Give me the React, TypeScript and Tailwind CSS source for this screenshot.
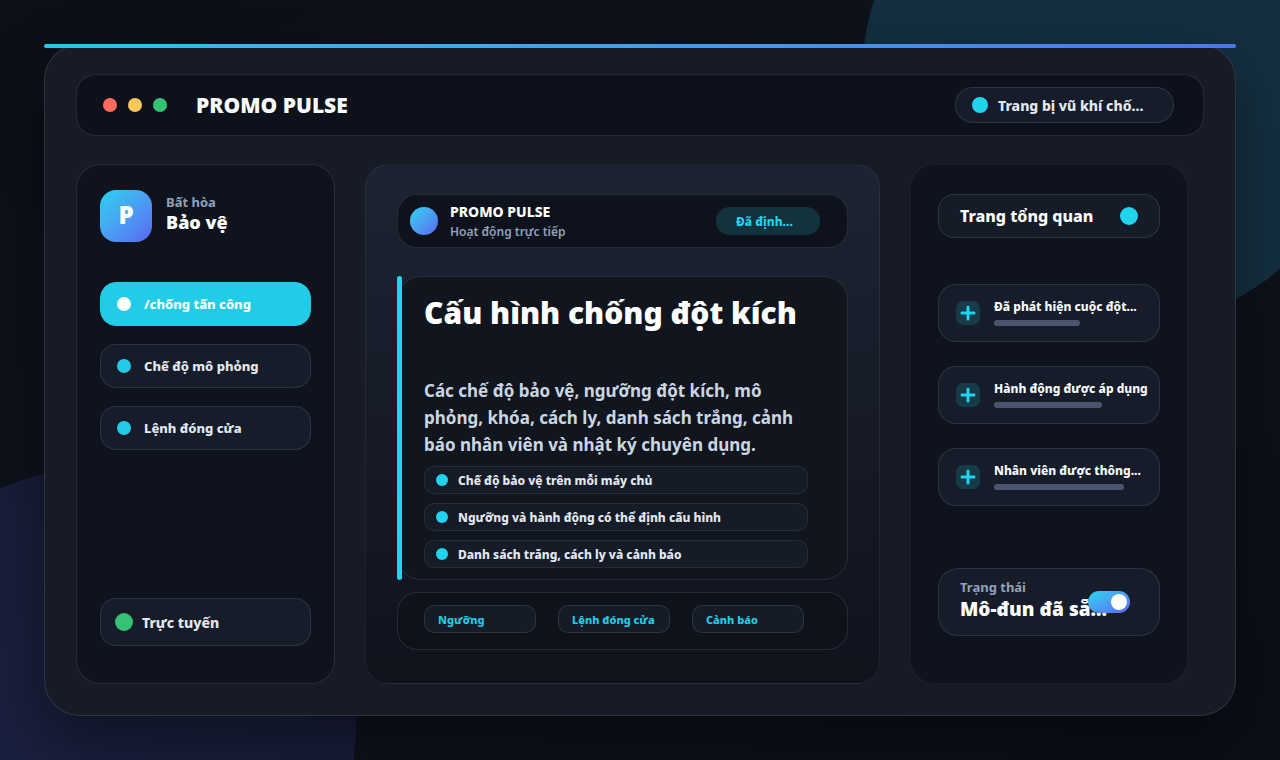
import { useState } from "react";
import clsx from "clsx";

const navItems = ["/chống tấn công", "Chế độ mô phỏng", "Lệnh đóng cửa"];

const features = [
  "Chế độ bảo vệ trên mỗi máy chủ",
  "Ngưỡng và hành động có thể định cấu hình",
  "Danh sách trắng, cách ly và cảnh báo",
];

const chips = ["Ngưỡng", "Lệnh đóng cửa", "Cảnh báo"];

const events = [
  { label: "Đã phát hiện cuộc đột...", progress: 86 },
  { label: "Hành động được áp dụng", progress: 108 },
  { label: "Nhân viên được thông...", progress: 130 },
];

export default function App() {
  return (
    <div className="relative isolate flex min-h-screen flex-col overflow-hidden bg-linear-to-br from-[#0b0f17] via-[#0f131c] to-[#0b0e16] p-11 font-['Noto_Sans',sans-serif] text-white">
      <div className="absolute -top-44 -right-[88px] -z-10 size-[506px] rounded-full bg-[#142f3f]" />
      <div className="absolute -bottom-[220px] -left-[156px] -z-10 size-[512px] rounded-full bg-linear-to-tr from-[#1b2345] to-[#171a33]" />

      <main className="relative flex flex-1 flex-col gap-7 rounded-[36px] border border-slate-400/20 bg-[#171b25] px-[31px] pt-[29px] pb-[31px] shadow-[0_24px_60px_rgba(0,0,0,0.4)]">
        <div className="absolute -inset-x-px -top-px h-1 rounded-full bg-linear-to-r from-[#2fc3ec] to-[#4a76f0]" />
        <Header />
        <div className="grid flex-1 grid-cols-[259px_minmax(0,1fr)_278px] gap-[30px] pr-4">
          <Sidebar />
          <Center />
          <Overview />
        </div>
      </main>
    </div>
  );
}

function Header() {
  return (
    <header className="flex h-[62px] items-center rounded-[20px] border border-white/10 bg-[#0d111b] pr-[29px] pl-[26px]">
      <div className="flex gap-[11px]">
        <span className="size-3.5 rounded-full bg-[#ff6b5f]" />
        <span className="size-3.5 rounded-full bg-[#f9c75c]" />
        <span className="size-3.5 rounded-full bg-[#35c275]" />
      </div>
      <h1 className="ml-[29px] text-[21px] leading-6 font-black text-slate-50">PROMO PULSE</h1>
      <div className="ml-auto flex h-9 w-[219px] items-center gap-2.5 rounded-full border border-white/10 bg-[#161c29] px-4">
        <span className="size-4 rounded-full bg-[#22d3ee]" />
        <span className="pt-0.5 text-sm font-extrabold text-slate-200">Trang bị vũ khí chố...</span>
      </div>
    </header>
  );
}

function Sidebar() {
  const [active, setActive] = useState(0);

  return (
    <aside className="flex flex-col rounded-3xl border border-white/10 bg-[#0f131d] px-[23px] pt-[25px] pb-[37px]">
      <div className="flex items-center gap-3.5">
        <div className="flex size-[52px] items-center justify-center rounded-2xl bg-linear-to-br from-[#22d3ee] to-[#5865f2] pb-0.5 text-2xl font-black">
          P
        </div>
        <div className="pb-2">
          <p className="text-[13px] leading-5 font-bold text-slate-400">Bất hòa</p>
          <p className="text-lg leading-5 font-black">Bảo vệ</p>
        </div>
      </div>

      <nav className="mt-10 flex flex-col gap-[18px]">
        {navItems.map((item, i) => (
          <button
            key={item}
            type="button"
            onClick={() => setActive(i)}
            className={clsx(
              "flex h-11 items-center gap-[13px] rounded-2xl border px-4 text-[13px] font-extrabold",
              i === active ? "border-[#22cce6] bg-[#22cce6] text-white" : "border-white/10 bg-[#161c29] text-slate-200",
            )}
          >
            <span className={clsx("size-3.5 rounded-full", i === active ? "bg-white" : "bg-[#22cce6]")} />
            <span className="pt-0.5">{item}</span>
          </button>
        ))}
      </nav>

      <div className="mt-auto flex h-12 items-center gap-[9px] rounded-2xl border border-white/10 bg-[#161c29] px-3.5">
        <span className="size-[18px] rounded-full bg-[#35c275]" />
        <span className="pt-0.5 text-sm font-extrabold text-slate-200">Trực tuyến</span>
      </div>
    </aside>
  );
}

function Center() {
  return (
    <section className="flex flex-col rounded-3xl border border-white/6 bg-linear-to-b from-[#1e2333] to-[#0f131c] px-[31px] pt-[29px] pb-[33px]">
      <div className="flex h-[54px] items-center rounded-[20px] border border-white/10 bg-[#0e121c] pr-[27px] pl-3">
        <span className="size-7 rounded-full bg-linear-to-br from-[#22d3ee] to-[#5865f2]" />
        <div className="ml-3 pt-0.5">
          <p className="text-sm leading-5 font-extrabold">PROMO PULSE</p>
          <p className="text-xs leading-5 font-semibold text-slate-400">Hoạt động trực tiếp</p>
        </div>
        <span className="ml-auto flex h-7 w-[104px] items-center rounded-full bg-[#14323d] px-5 pt-0.5 text-xs font-extrabold text-[#22d3ee]">
          Đã định...
        </span>
      </div>

      <article className="relative mt-7 rounded-3xl border border-white/10 bg-[#10151e] pt-4 pr-[39px] pb-[11px] pl-[26px]">
        <div className="absolute -inset-y-px -left-px w-[5px] rounded-full bg-[#22d3ee]" />
        <h2 className="text-3xl leading-10 font-black whitespace-nowrap">Cấu hình chống đột kích</h2>
        <p className="mt-11 text-[17px] leading-[27px] font-bold text-slate-300">
          Các chế độ bảo vệ, ngưỡng đột kích, mô phỏng, khóa, cách ly, danh sách trắng, cảnh báo nhân viên và nhật ký
          chuyên dụng.
        </p>
        <ul className="mt-2 flex flex-col gap-[9px]">
          {features.map((feature) => (
            <li
              key={feature}
              className="flex h-7 items-center gap-2.5 rounded-[10px] border border-white/8 bg-[#161b28] px-[11px] text-xs font-extrabold text-slate-200"
            >
              <span className="size-3 rounded-full bg-[#22d3ee]" />
              <span className="pt-0.5">{feature}</span>
            </li>
          ))}
        </ul>
      </article>

      <div className="mt-auto flex h-[58px] gap-[22px] rounded-[20px] border border-white/10 bg-[#0e121b] px-[26px] pt-3">
        {chips.map((chip) => (
          <button
            key={chip}
            type="button"
            className="h-7 w-28 rounded-[10px] border border-white/10 bg-[#161b28] px-[13px] pt-0.5 text-left text-[11px] font-extrabold whitespace-nowrap text-[#22cce6]"
          >
            {chip}
          </button>
        ))}
      </div>
    </section>
  );
}

function Overview() {
  return (
    <aside className="flex flex-col rounded-3xl border border-white/5 bg-[#0f131d] px-[27px] pt-[29px] pb-[47px]">
      <div className="flex h-11 items-center justify-between rounded-2xl border border-white/10 bg-[#161b28] px-[21px]">
        <h2 className="text-base font-extrabold">Trang tổng quan</h2>
        <span className="size-[18px] rounded-full bg-[#22d3ee]" />
      </div>

      <ul className="mt-[46px] flex flex-col gap-6">
        {events.map((event) => (
          <li
            key={event.label}
            className="flex h-[58px] items-center gap-3.5 rounded-[18px] border border-white/10 bg-[#161c29] px-[17px]"
          >
            <PlusIcon />
            <div className="pb-[3px] whitespace-nowrap">
              <p className="mb-[3px] text-xs leading-5 font-extrabold text-slate-50">{event.label}</p>
              <div className="h-1.5 rounded-full bg-[#4c556f]" style={{ width: event.progress }} />
            </div>
          </li>
        ))}
      </ul>

      <StatusToggle />
    </aside>
  );
}

function PlusIcon() {
  return (
    <svg className="size-6 shrink-0" viewBox="0 0 24 24" fill="none" aria-hidden>
      <rect width="24" height="24" rx="7" fill="#163a47" />
      <path d="M12 6v12M6 12h12" stroke="#22d3ee" strokeWidth="3" strokeLinecap="round" />
    </svg>
  );
}

function StatusToggle() {
  const [enabled, setEnabled] = useState(true);

  return (
    <label className="relative mt-auto flex h-[68px] flex-col rounded-[20px] border border-white/10 bg-[#161c29] px-[21px] pt-2">
      <span className="text-[13px] leading-5 font-bold text-slate-400">Trạng thái</span>
      <span className="text-[19px] leading-6 font-black whitespace-nowrap">Mô-đun đã sẵ...</span>
      <input
        type="checkbox"
        checked={enabled}
        onChange={(e) => setEnabled(e.target.checked)}
        className="peer absolute top-[22px] right-[29px] h-[22px] w-[42px] appearance-none rounded-full bg-slate-600 bg-linear-to-br checked:from-[#22d3ee] checked:to-[#5865f2]"
      />
      <span className="pointer-events-none absolute top-[25px] right-[52px] size-4 rounded-full bg-white peer-checked:right-8" />
    </label>
  );
}
